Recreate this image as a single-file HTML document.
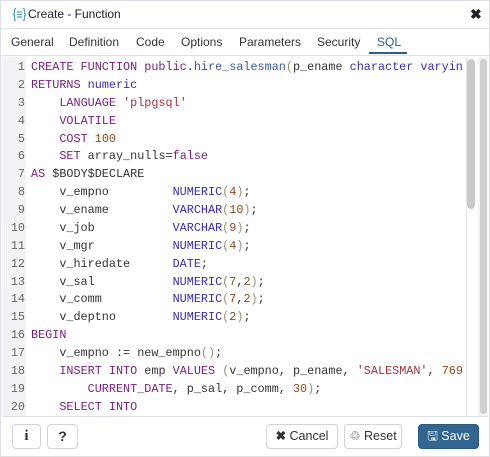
<!DOCTYPE html><html><head><style>
body{margin:0;width:490px;height:457px;background:#fff;font-family:"Liberation Sans",sans-serif;overflow:hidden;position:relative}
.dlg{position:absolute;left:0;top:0;width:488px;height:455px;border:1px solid #dde0e6;}
.title{position:absolute;left:0;top:0;width:488px;height:27px;border-bottom:1px solid #dde0e6;}
.title span{position:absolute;left:27px;top:6px;font-size:12px;color:#222}
.tabs{position:absolute;top:28px;left:0;width:488px;height:26px;background:#fff;border-bottom:1px solid #dde0e6}
.tab{position:absolute;top:6px;font-size:12px;color:#333}
.ed{position:absolute;left:1px;top:56px;width:486px;height:359px;background:#fff;overflow:hidden;border-bottom:1px solid #dde0e6}
.gut{position:absolute;left:0;top:0;width:24px;height:100%;background:#f2f3f5}
pre{margin:0;position:absolute;left:0;top:2px;font-family:"Liberation Mono",monospace;font-size:11.8px;line-height:17.88px;color:#333}
.n{display:inline-block;width:23px;text-align:right;color:#666;margin-right:6px}
.k{color:#7b1f84}.t{color:#3a2cb0}.s{color:#a3313c}.d{color:#8a4a1d}.p{color:#999077}.f{color:#3a55b0}
.btn{position:absolute;top:423px;height:25px;border:1px solid #d0d3d8;border-radius:4px;background:#fff;font-size:12.5px;color:#333;box-sizing:border-box;text-align:center;line-height:23px}
</style></head><body><div class="dlg">
<div class="title"><svg style="position:absolute;left:11px;top:6px" width="15" height="15" viewBox="0 0 15 15" fill="none" stroke="#4aa3c2" stroke-width="1.2"><path d="M4 1.5C2.5 1.5 2.5 2.5 2.5 4V6C2.5 7 1.5 7.5 1 7.5C1.5 7.5 2.5 8 2.5 9V11C2.5 12.5 2.5 13.5 4 13.5M11 1.5C12.5 1.5 12.5 2.5 12.5 4V6C12.5 7 13.5 7.5 14 7.5C13.5 7.5 12.5 8 12.5 9V11C12.5 12.5 12.5 13.5 11 13.5M5 5H10M5 7.5H10M5 10H10"/></svg><span>Create - Function</span><span style="left:469px;top:5px;font-weight:bold;font-size:14px">✖</span></div>
<div class="tabs"><span class="tab" style="left:10px">General</span><span class="tab" style="left:68px">Definition</span><span class="tab" style="left:135px">Code</span><span class="tab" style="left:180px">Options</span><span class="tab" style="left:238px">Parameters</span><span class="tab" style="left:316px">Security</span><span class="tab" style="left:376px;color:#2c5b8c">SQL</span><div style="position:absolute;left:368px;top:23px;width:38px;height:2px;background:#2c5b8c"></div></div>
<div class="ed"><div class="gut"></div>
<pre><span class="n">1</span><span class="k">CREATE FUNCTION public</span>.<span class="f">hire_salesman</span><span class="p">(</span>p_ename <span class="t">character varyin</span>
<span class="n">2</span><span class="k">RETURNS</span> <span class="t">numeric</span>
<span class="n">3</span>    <span class="k">LANGUAGE</span> <span class="s">'plpgsql'</span>
<span class="n">4</span>    <span class="k">VOLATILE</span>
<span class="n">5</span>    <span class="k">COST</span> <span class="d">100</span>
<span class="n">6</span>    <span class="k">SET</span> array_nulls=<span class="k">false</span>
<span class="n">7</span><span class="k">AS</span> $BODY$DECLARE
<span class="n">8</span>    v_empno         <span class="t">NUMERIC</span><span class="p">(</span><span class="d">4</span><span class="p">)</span>;
<span class="n">9</span>    v_ename         <span class="t">VARCHAR</span><span class="p">(</span><span class="d">10</span><span class="p">)</span>;
<span class="n">10</span>    v_job           <span class="t">VARCHAR</span><span class="p">(</span><span class="d">9</span><span class="p">)</span>;
<span class="n">11</span>    v_mgr           <span class="t">NUMERIC</span><span class="p">(</span><span class="d">4</span><span class="p">)</span>;
<span class="n">12</span>    v_hiredate      <span class="t">DATE</span>;
<span class="n">13</span>    v_sal           <span class="t">NUMERIC</span><span class="p">(</span><span class="d">7</span>,<span class="d">2</span><span class="p">)</span>;
<span class="n">14</span>    v_comm          <span class="t">NUMERIC</span><span class="p">(</span><span class="d">7</span>,<span class="d">2</span><span class="p">)</span>;
<span class="n">15</span>    v_deptno        <span class="t">NUMERIC</span><span class="p">(</span><span class="d">2</span><span class="p">)</span>;
<span class="n">16</span><span class="k">BEGIN</span>
<span class="n">17</span>    v_empno := new_empno<span class="p">()</span>;
<span class="n">18</span>    <span class="k">INSERT INTO</span> emp <span class="k">VALUES</span> <span class="p">(</span>v_empno, p_ename, <span class="s">'SALESMAN'</span>, <span class="d">769</span>
<span class="n">19</span>        <span class="k">CURRENT_DATE</span>, p_sal, p_comm, <span class="d">30</span><span class="p">)</span>;
<span class="n">20</span>    <span class="k">SELECT INTO</span>
</pre>
<div style="position:absolute;left:464px;top:0;width:1px;height:100%;background:#e6e6e6"></div>
<div style="position:absolute;left:465px;top:2px;width:8px;height:150px;border-radius:4px;background:#c9c9c9"></div>
<div style="position:absolute;left:476px;top:0;width:10px;height:100%;background:#f4f4f4"></div>
<div style="position:absolute;left:478px;top:2px;width:7px;height:355px;border-radius:4px;background:#cfcfcf"></div>
</div>
<div class="btn" style="left:11px;width:29px;font-weight:bold;font-family:'Liberation Serif',serif;font-size:15px">i</div>
<div class="btn" style="left:46px;width:31px;font-weight:bold;font-size:14px">?</div>
<div class="btn" style="left:265px;width:72px"><b>✖</b> Cancel</div>
<div class="btn" style="left:343px;width:58px">♲ Reset</div>
<div class="btn" style="left:417px;width:61px;background:#326690;border-color:#2a5a80;color:#fff">🖫 Save</div>
</div></body></html>
